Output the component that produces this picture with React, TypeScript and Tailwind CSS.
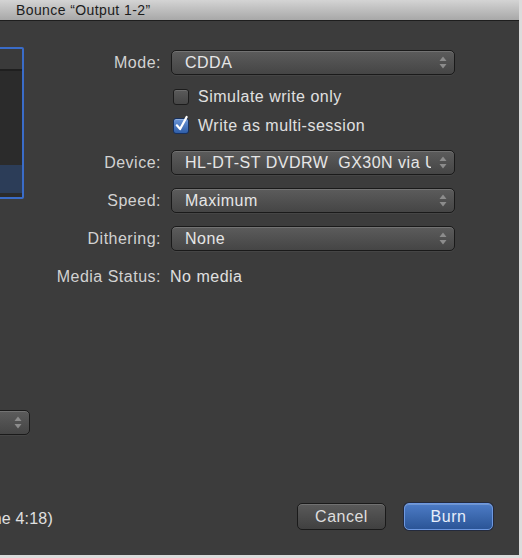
import type { ReactNode } from 'react';

const FONT = "font-['Liberation_Sans',Arial,sans-serif]";

function Arrows() {
  return (
    <svg width="8" height="13" viewBox="0 0 8 13" className="shrink-0">
      <path d="M4 0.5 L7.5 5 L0.5 5 Z" fill="#8c8c8c" />
      <path d="M0.5 8 L7.5 8 L4 12.5 Z" fill="#8c8c8c" />
    </svg>
  );
}

function Popup({ value, className = '' }: { value: string; className?: string }) {
  return (
    <div
      className={`flex h-[25px] items-center rounded-[5px] border border-[#1a1a1a] bg-gradient-to-b from-[#5c5c5c] to-[#454545] pl-[13px] pr-[7px] shadow-[inset_0_1px_0_rgba(255,255,255,0.14),0_1px_0_rgba(255,255,255,0.05)] ${className}`}
    >
      <span className="min-w-0 flex-1 overflow-hidden whitespace-pre text-[16px] tracking-[0.5px] text-[#e6e6e6]">
        {value}
      </span>
      <span className="ml-[8px]">
        <Arrows />
      </span>
    </div>
  );
}

function Checkbox({ checked }: { checked?: boolean }) {
  if (checked) {
    return (
      <span className="flex h-[16px] w-[16px] items-center justify-center rounded-[3px] border border-[#16305e] bg-gradient-to-b from-[#6b95d6] to-[#2f5ea8] shadow-[inset_0_1px_0_rgba(255,255,255,0.25)]">
        <svg width="14" height="17" viewBox="0 0 14 17" className="-mt-[6px] ml-[1px]">
          <path
            d="M2 10.5 L5.5 14.5 L12.5 1.5"
            fill="none"
            stroke="#ffffff"
            strokeWidth="2.4"
            strokeLinecap="round"
            strokeLinejoin="round"
          />
        </svg>
      </span>
    );
  }
  return (
    <span className="block h-[16px] w-[16px] rounded-[3px] border border-[#1c1c1c] bg-gradient-to-b from-[#5a5a5a] to-[#464646] shadow-[inset_0_1px_0_rgba(255,255,255,0.12)]" />
  );
}

function Label({ children }: { children: ReactNode }) {
  return (
    <div className="pr-[10px] text-right text-[16px] tracking-[0.5px] whitespace-nowrap text-[#d2d2d2]">
      {children}
    </div>
  );
}

export default function App() {
  return (
    <div className={`h-[558px] w-[522px] overflow-hidden bg-[#dcdcdc] ${FONT}`}>
      <div className="flex h-[555px] w-[519px] flex-col overflow-hidden bg-[#3c3c3c]">
        {/* Title bar */}
        <div className="flex h-[21px] shrink-0 items-center border-b border-[#1e1e1e] bg-gradient-to-b from-[#d4d4d4] to-[#a8a8a8] pl-[16px]">
          <span className="text-[14px] leading-none tracking-[0.4px] text-[#1c1c1c]">
            Bounce “Output 1-2”
          </span>
        </div>

        {/* Body */}
        <div className="flex min-h-0 flex-1 flex-col">
          <div className="flex">
            {/* Left column, cut off by the window edge */}
            <div className="flex w-[30px] shrink-0 flex-col items-end">
              <div className="mr-[6px] mt-[26px] h-[152px] w-[200px] shrink-0 rounded-[2px] border-[2px] border-[#3a6cc8] bg-[#2b2b2b]">
                <div className="h-[22px] border-b-[2px] border-[#1f1f1f] bg-[#3a3a3a]" />
                <div className="h-[94px]" />
                <div className="h-[28px] bg-[#2c3d58]" />
              </div>
              <Popup value="" className="mt-[211px] w-[150px] shrink-0" />
            </div>

            {/* Form */}
            <div className="grid grid-cols-[141px_284px] content-start items-center pt-[29px]">
              <Label>Mode:</Label>
              <Popup value="CDDA" />

              <div />
              <div className="mt-[14px] flex h-[16px] items-center gap-[9px] pl-[2px]">
                <Checkbox />
                <span className="text-[16px] tracking-[0.5px] text-[#e0e0e0]">Simulate write only</span>
              </div>

              <div />
              <div className="mt-[13px] flex h-[16px] items-center gap-[9px] pl-[2px]">
                <Checkbox checked />
                <span className="text-[16px] tracking-[0.5px] text-[#e0e0e0]">Write as multi-session</span>
              </div>

              <Label>
                <span className="mt-[16px] block">Device:</span>
              </Label>
              <Popup value="HL-DT-ST DVDRW  GX30N via USB" className="mt-[16px]" />

              <Label>
                <span className="mt-[13px] block">Speed:</span>
              </Label>
              <Popup value="Maximum" className="mt-[13px]" />

              <Label>
                <span className="mt-[13px] block">Dithering:</span>
              </Label>
              <Popup value="None" className="mt-[13px]" />

              <Label>
                <span className="mt-[14px] block">Media Status:</span>
              </Label>
              <div className="mt-[14px] -ml-[1px] text-[16px] tracking-[0.5px] text-[#e0e0e0]">No media</div>
            </div>
          </div>

          {/* Bottom row */}
          <div className="mt-auto flex items-center pb-[24px]">
            <div className="flex w-[53px] shrink-0 justify-end pt-[5px]">
              <span className="whitespace-nowrap text-[16px] tracking-[0.2px] text-[#e0e0e0]">
                (Offline 4:18)
              </span>
            </div>
            <div className="ml-auto flex gap-[18px] pr-[26px]">
              <button
                type="button"
                className="h-[27px] w-[89px] rounded-[5px] border border-[#1a1a1a] bg-gradient-to-b from-[#5a5a5a] to-[#404040] text-[16px] tracking-[0.5px] text-[#dedede] shadow-[inset_0_1px_0_rgba(255,255,255,0.14)]"
              >
                Cancel
              </button>
              <button
                type="button"
                className="h-[27px] w-[89px] rounded-[5px] border border-[#6d98e0] bg-gradient-to-b from-[#4d7cc6] to-[#2b5597] text-[16px] tracking-[0.5px] text-[#e8eefa] shadow-[inset_0_1px_0_rgba(255,255,255,0.2),0_0_0_1px_rgba(20,30,60,0.6)]"
              >
                Burn
              </button>
            </div>
          </div>
        </div>
      </div>
    </div>
  );
}
